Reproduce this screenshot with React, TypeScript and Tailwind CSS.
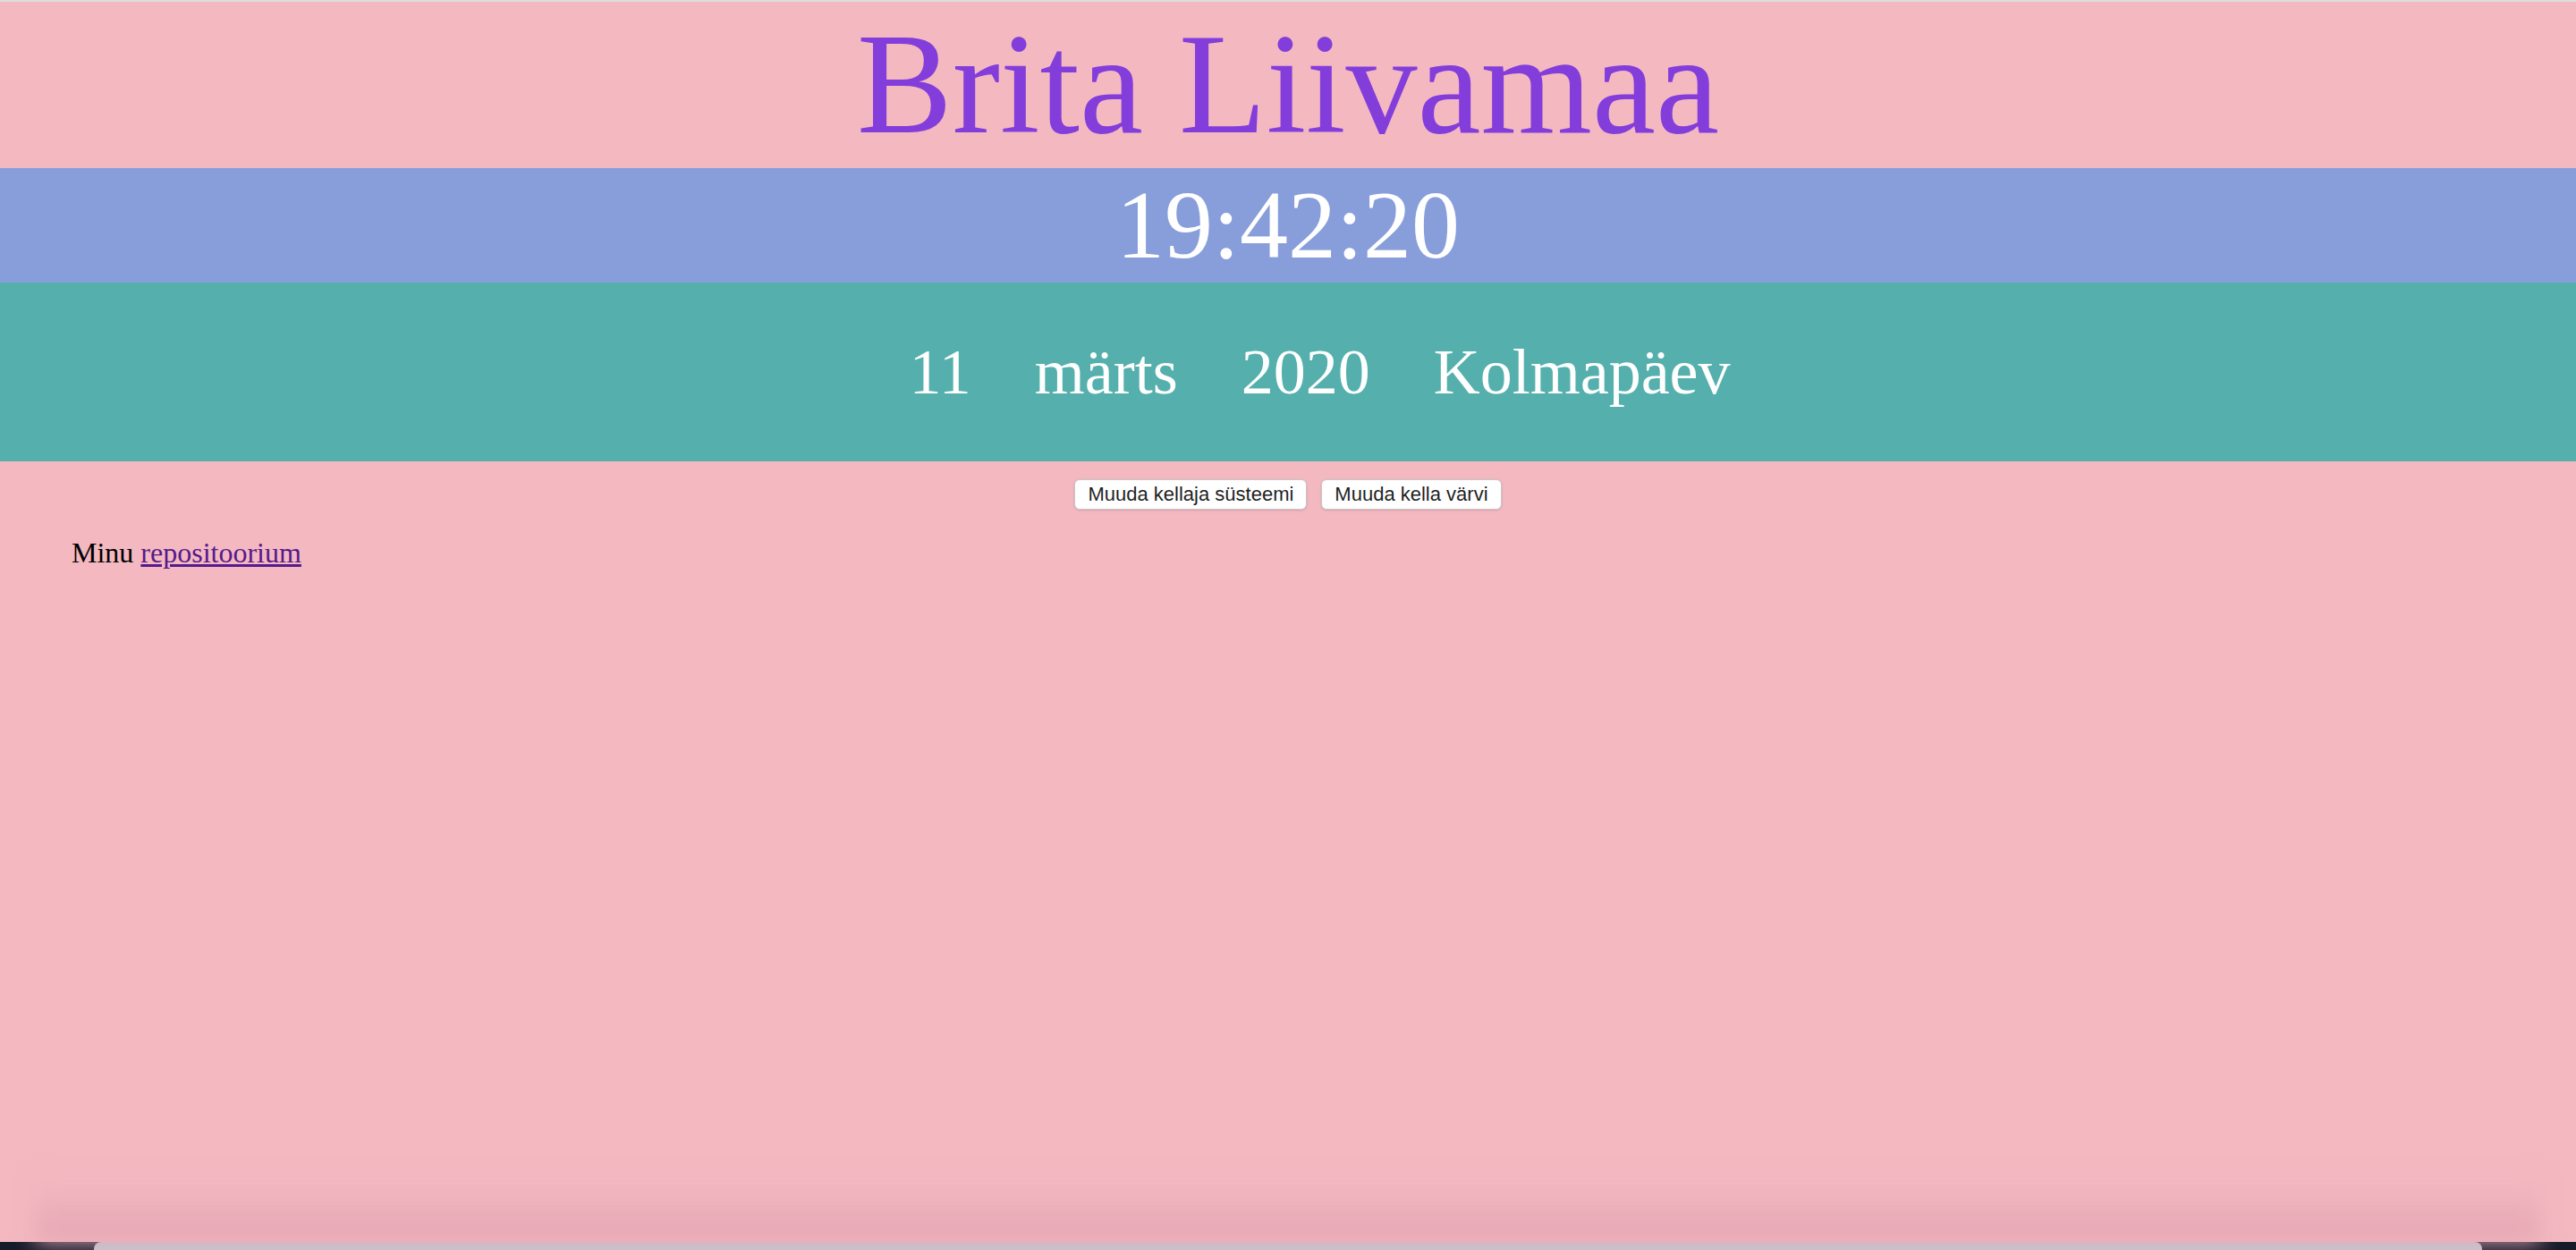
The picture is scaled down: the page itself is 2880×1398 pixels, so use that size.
export default function App() {
  const dateParts = ["11", "märts", "2020", "Kolmapäev"];

  return (
    <div className="h-screen overflow-hidden flex flex-col bg-[#f4b8c1] font-['Liberation_Serif',serif]">
      <div className="h-[2px] bg-[#dcdcdc]" />

      {/* Header */}
      <header className="h-[186px]">
        <h1 className="text-center text-[160px] leading-[184px] text-[#833ddb]">Brita Liivamaa</h1>
      </header>

      {/* Clock */}
      <div className="h-[128px] bg-[#889eda] text-center text-[108px] leading-[128px] text-white">19:42:20</div>

      {/* Date */}
      <div className="h-[200px] bg-[#55b0ad] flex items-center justify-center text-[72px] leading-[83px] text-white">
        {dateParts.map((p) => (
          <span key={p} className="ml-[71px]">
            {p}
          </span>
        ))}
      </div>

      {/* Buttons */}
      <div className="mt-[20px] flex justify-center gap-[16px] font-['Liberation_Sans',Arial,sans-serif]">
        <button className="h-[34px] px-[14px] bg-white border border-[#c6c6c6] rounded-[6px] shadow-sm text-[22px] leading-none text-[#1f1f1f]">
          Muuda kellaja süsteemi
        </button>
        <button className="h-[34px] px-[14px] bg-white border border-[#c6c6c6] rounded-[6px] shadow-sm text-[22px] leading-none text-[#1f1f1f]">
          Muuda kella värvi
        </button>
      </div>

      <p className="mt-[30px] pl-[80px] text-[32px] leading-[37px] text-black">
        Minu{" "}
        <a href="#" className="text-[#551a8b] underline">
          repositoorium
        </a>
      </p>

      <div className="flex-1" />

      {/* window shadow at the bottom edge */}
      <div className="h-[70px] mx-[40px] bg-linear-to-b from-[#f4b8c1] to-[#e3a6b2] blur-[12px]" />
      <div className="h-[9px] bg-[#171c2b] px-[105px]">
        <div className="h-full bg-[#c3c8d2] rounded-t-[8px]" />
      </div>
    </div>
  );
}
